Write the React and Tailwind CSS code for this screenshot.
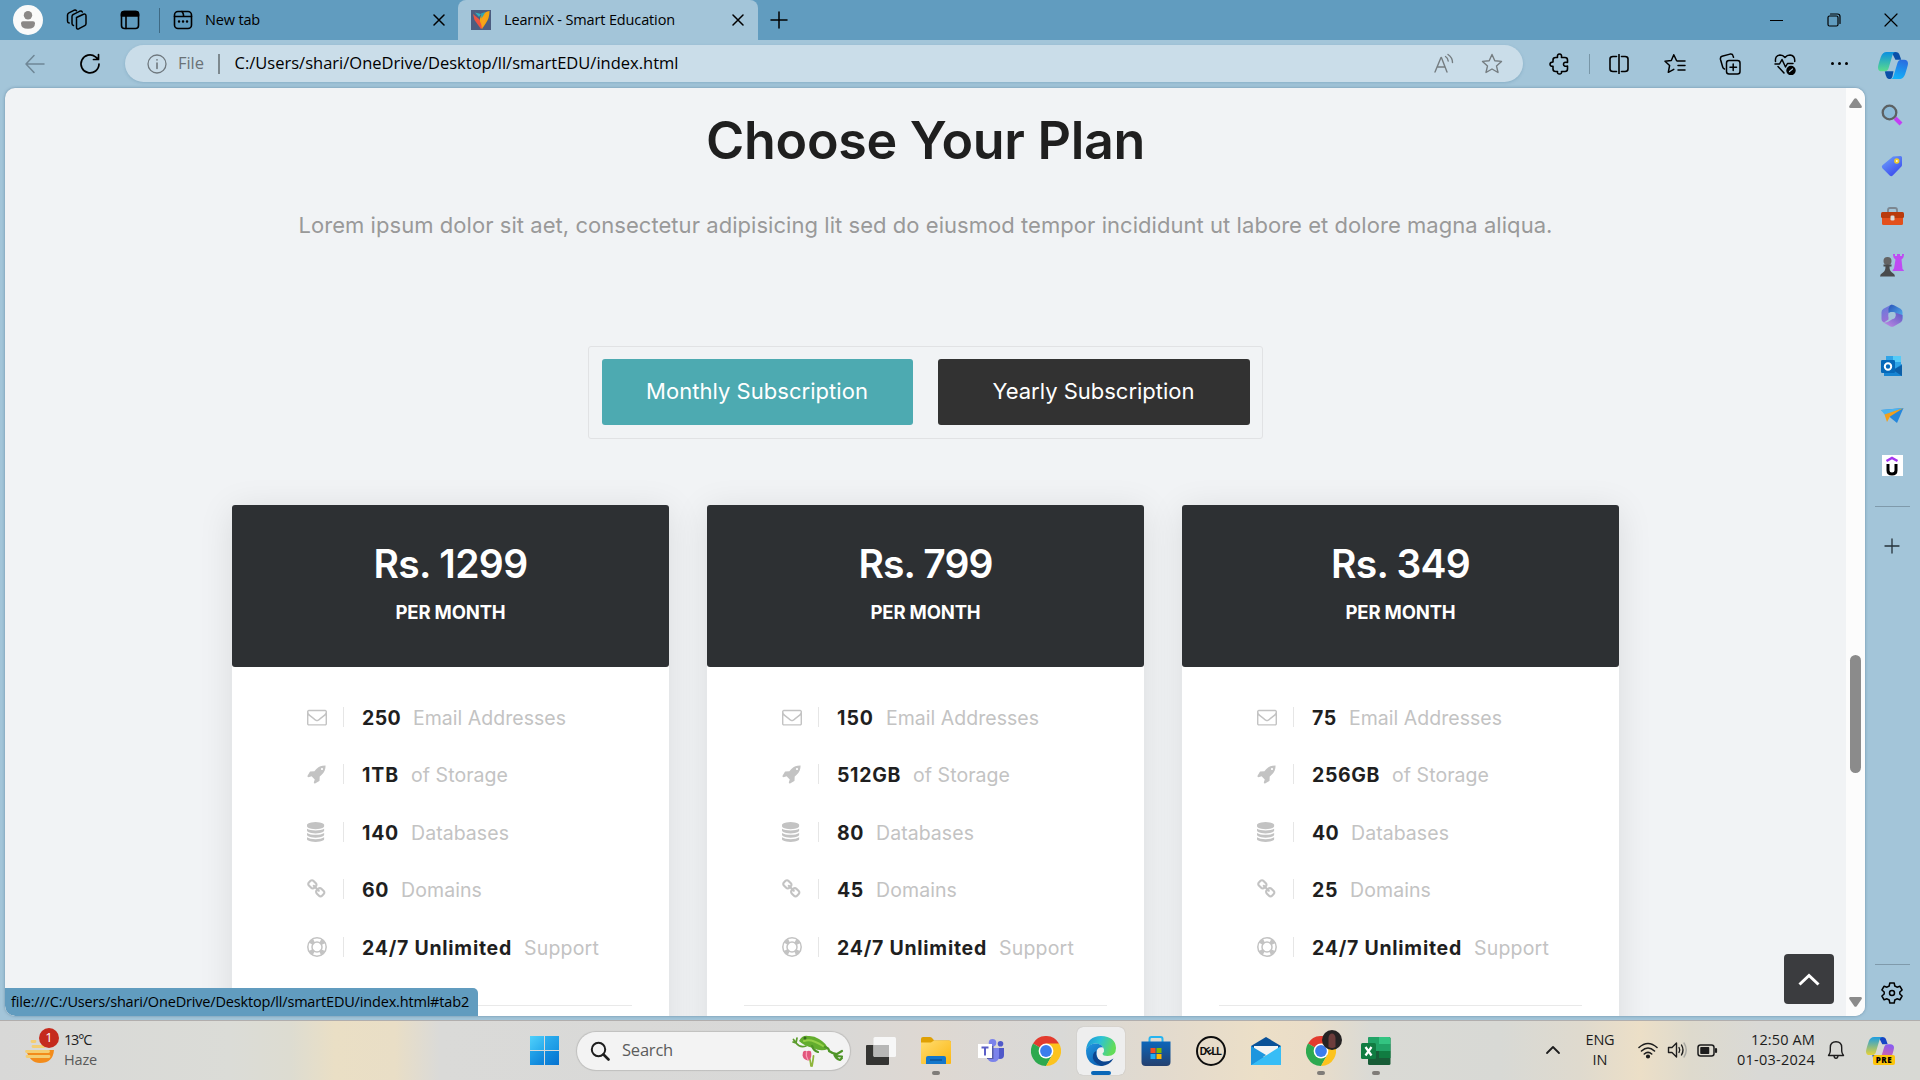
import React, { useLayoutEffect, useRef } from "react";

/* Text set to a given measure: tracking is computed from the natural width. */
function Fit({ w, className = "", children }) {
  const ref = useRef(null);
  useLayoutEffect(() => {
    const el = ref.current;
    el.style.letterSpacing = "0px";
    const natural = el.getBoundingClientRect().width;
    const n = el.textContent.length;
    const gap = (w - natural) / n;
    el.style.letterSpacing = `${gap}px`;
  }, [w, children]);
  return (
    <span ref={ref} className={`inline-block whitespace-nowrap ${className}`}>
      {children}
    </span>
  );
}

function Ic({ s = 20, sw = 1.5, className = "", vb = "0 0 20 20", children }) {
  return (
    <svg
      width={s}
      height={s}
      viewBox={vb}
      fill="none"
      stroke="currentColor"
      strokeWidth={sw}
      strokeLinecap="round"
      strokeLinejoin="round"
      className={`shrink-0 ${className}`}
    >
      {children}
    </svg>
  );
}

function Slot({ className, children }) {
  return <div className={`flex shrink-0 items-center justify-center ${className}`}>{children}</div>;
}

const CloseX = ({ s = 12 }) => (
  <Ic s={s} vb="0 0 12 12" sw={1.5}>
    <path d="M1 1l10 10M11 1L1 11" />
  </Ic>
);

function TabStrip() {
  return (
    <div className="flex h-10 items-center bg-[#619cbf] text-black">
      <Slot className="ml-[13px] w-[30px]">
        <div className="flex size-[30px] items-center justify-center rounded-full bg-[#fafafa]">
          <svg width="16" height="18" viewBox="0 0 16 18" fill="#8b8887">
            <circle cx="8" cy="4.2" r="4.2" />
            <path d="M1 12.2q0-2 2-2h10q2 0 2 2Q15 17.700 8 17.700T1 12.200z" />
          </svg>
        </div>
      </Slot>
      <Slot className="ml-[22px] w-6">
        <Ic s={22} vb="0 0 22 22" sw={1.5}>
          <path d="M10.500 8.500l7-3.300q2.500-.8 2.500 1.800v7.500q0 1.500-1.300 2.200l-5.700 3q-2.500 1-2.500-1.500z" />
          <path d="M7.500 16.500q-1.500-.3-1.500-2V7.500q0-1.500 1.500-2.200l6-3q2-.8 2.800.7" />
          <path d="M3.200 14q-1.700-.2-1.700-2V6q0-1.500 1.400-2.200l5-2.500q1.800-.7 2.600.5" />
        </Ic>
      </Slot>
      <Slot className="ml-[29px] w-6">
        <Ic s={20} sw={1.6}>
          <rect x="1.500" y="1.500" width="17" height="17" rx="3" />
          <path d="M1.500 6V4q0-2.500 2.500-2.500h12q2.500 0 2.500 2.500v2z" fill="currentColor" />
          <path d="M6 6v12.500" />
        </Ic>
      </Slot>
      <div className="ml-[17px] h-[25px] w-px bg-[#3f6a84]" />
      <div className="flex h-10 w-[298px] items-center">
        <Slot className="ml-[13px] w-5">
          <Ic s={20} sw={1.6}>
            <rect x="1.500" y="1.500" width="17" height="17" rx="3.500" />
            <path d="M1.500 6.500h9V5q0-1.500-1.500-3.500M10.500 6.500h8" />
            <path d="M6 11.500h.1M10 11.500h.1M14 11.500h.1" strokeWidth="2.400" />
          </Ic>
        </Slot>
        <Fit w={55} className="ml-[12px] text-[14.500px]">New tab</Fit>
        <Slot className="mr-[9px] ml-auto w-5"><CloseX /></Slot>
      </div>
      <div className="flex h-10 w-[300px] items-center rounded-t-lg bg-[#a3c5d9]">
        <svg width="20" height="20" viewBox="0 0 20 20" className="ml-[13px] shrink-0">
          <rect width="20" height="20" fill="#4c5d80" />
          <path d="M4 2.500l6 1.500-2 3z" fill="#2fb0c0" />
          <path d="M10 5.500Q14 1.500 18.500 1q0 7-3.500 12l-4 6-3-7z" fill="#f5a60f" />
          <path d="M2 4l6 5 3.500 8.500L10 19 3.500 10z" fill="#ee5340" />
          <path d="M10 3.500l4.500-1.500-4 6.500z" fill="#2fa5b5" />
          <path d="M11 8l5.500-4-3 9-3 5z" fill="#f9a31c" />
        </svg>
        <Fit w={171} className="ml-[13px] text-[14.500px]">LearniX - Smart Education</Fit>
        <Slot className="mr-[10px] ml-auto w-5"><CloseX /></Slot>
      </div>
      <Slot className="ml-[11px] w-5">
        <Ic s={18} vb="0 0 18 18" sw={1.500}><path d="M9 1v16M1 9h16" /></Ic>
      </Slot>
      <Slot className="ml-auto w-[57px]"><div className="h-px w-[13px] bg-black" /></Slot>
      <Slot className="w-[57px]">
        <Ic s={14} vb="0 0 14 14" sw={1.200}>
          <rect x="1" y="3" width="10" height="10" rx="1.500" />
          <path d="M3.500 1h7q2.500 0 2.500 2.500v7" />
        </Ic>
      </Slot>
      <Slot className="mr-px w-[57px]">
        <Ic s={14} vb="0 0 14 14" sw={1.200}><path d="M1 1l12 12M13 1L1 13" /></Ic>
      </Slot>
    </div>
  );
}

function CopilotMark({ w = 31, colors }) {
  const [a, b, c, d, e, id] = colors;
  return (
    <svg width={w} height={(w * 28) / 31} viewBox="0 0 31 28" className="shrink-0">
      <defs>
        <linearGradient id={`${id}l`} x1="0" y1="0" x2="0" y2="1">
          <stop offset="0" stopColor={a} />
          <stop offset="1" stopColor={b} />
        </linearGradient>
        <linearGradient id={`${id}r`} x1="0.600" y1="0" x2="0.300" y2="1">
          <stop offset="0" stopColor={c} />
          <stop offset="1" stopColor={d} />
        </linearGradient>
      </defs>
      <path d="M14 0h4q3.500 0 4.500 3.500L24 8h-6z" fill={e} />
      <path d="M7 20h9l-1 5q-.8 3-3 3-3 0-4-4z" fill={e} />
      <path d="M9 0h9.500Q15.800 0 15 3l-4 13.500Q10 20 6.500 20H4q-4 0-4-4 0-2 3-11Q4.700 0 9 0z" fill={`url(#${id}l)`} />
      <path d="M22 28h-9.500q2.700 0 3.500-3l4-13.500Q21 8 24.500 8H27q4 0 4 4 0 2-3 11-1.700 5-6 5z" fill={`url(#${id}r)`} />
    </svg>
  );
}

function Toolbar() {
  return (
    <div className="flex h-12 items-center bg-[#a3c5d9] pb-px text-black">
      <Slot className="ml-[25px] w-5 text-[#6f8796]">
        <Ic s={20}><path d="M19 10H1M9 1.500L1 10l8 8.500" /></Ic>
      </Slot>
      <Slot className="ml-[35px] w-5">
        <Ic s={22} vb="0 0 22 22" sw={1.700}>
          <path d="M20 11a9 9 0 1 1-3.500-7.200L19 6M19.500 1.500V6.500H14.500" />
        </Ic>
      </Slot>
      <div className="ml-[25px] flex h-[37px] w-[1398px] items-center rounded-full bg-[#cadde9] shadow-[0_1px_3px_rgba(60,110,145,0.25)]">
        <Slot className="ml-[22px] w-5 text-[#6f787e]">
          <Ic s={20} sw={1.300}>
            <circle cx="10" cy="10" r="9" />
            <path d="M10 9v5.500M10 5.800v.1" strokeWidth="1.600" />
          </Ic>
        </Slot>
        <Fit w={26} className="ml-[11px] text-[16.500px] text-[#6a7277]">File</Fit>
        <div className="ml-[14px] h-5 w-[1.500px] bg-[#7d898f]" />
        <Fit w={444} className="ml-[15px] text-[16.500px]">C:/Users/shari/OneDrive/Desktop/ll/smartEDU/index.html</Fit>
        <Slot className="mr-[27px] ml-auto w-[22px] text-[#757d81]">
          <Ic s={22} vb="0 0 22 22" sw={1.400}>
            <path d="M2 19L8 4.500h.4L14 19M4.200 14h7.800M12.500 3.500q2.500 1.500 2.700 4.500M15 1.500q4.500 3 4.500 8" />
          </Ic>
        </Slot>
        <Slot className="mr-[21px] w-5 text-[#757d81]">
          <Ic s={22} vb="0 0 22 22" sw={1.400}>
            <path d="M11 1.500l2.800 6.200 6.700.7-5 4.500 1.500 6.600L11 16l-6 3.500 1.500-6.600-5-4.500 6.700-.7z" />
          </Ic>
        </Slot>
      </div>
      <Slot className="ml-[26px] w-[22px]">
        <Ic s={22} vb="0 0 22 22" sw={1.600}>
          <path d="M4 7q0-2.500 2.500-2.500h2q-.5-3.500 2-3.500t2 3.500h3.500Q18.500 4.500 18.500 7v2.500q-4-.8-4 1.800t4 1.800V16q0 2.500-2.500 2.500h-3.500q.5 2.500-2 2.500t-2-2.500H6.500Q4 18.500 4 16v-2.700Q1 13.500 1 11.300T4 9z" />
        </Ic>
      </Slot>
      <div className="ml-[18px] h-5 w-px bg-[#7896a7]" />
      <Slot className="ml-[18px] w-[22px]">
        <Ic s={20} sw={1.600}>
          <path d="M7.500 2.500H4Q1 2.500 1 5v10q0 2.500 3 2.500h3.500M12.500 2.500H16q3 0 3 2.500v10q0 2.500-3 2.500h-3.500M10 .5v19" />
        </Ic>
      </Slot>
      <Slot className="ml-[34px] w-[22px]">
        <Ic s={22} vb="0 0 22 22" sw={1.500}>
          <path d="M12.500 7.500L9.800 1.800 7.300 7.500 1 8.200l4.600 4.300-1.300 6.800 5.500-3M13 8h8M14 12.500h7M14 17h7" />
        </Ic>
      </Slot>
      <Slot className="ml-[33px] w-[22px]">
        <Ic s={22} vb="0 0 22 22" sw={1.500}>
          <rect x="7.500" y="7.500" width="13.500" height="13.500" rx="2.500" />
          <path d="M14.200 11v6.500M11 14.200h6.500M5.500 16Q4 15.500 3.700 14L1.500 6.500Q1 4 3 3.300l8-2.200q2.500-.5 3 1.600l.5 1.500" />
        </Ic>
      </Slot>
      <Slot className="ml-[33px] w-[22px]">
        <Ic s={22} vb="0 0 22 22" sw={1.500}>
          <path d="M1.500 8.500Q.8 2.500 6 2q3 0 5 2.500Q13 2 16 2q5.200.5 4.700 6.500M4 13.500l6 6.500M1 11h4.500L8 6.500l3.500 7.500 2-3.500H19" />
          <circle cx="17" cy="17.500" r="4" fill="currentColor" />
          <path d="M15.500 18.500l3-2.500" stroke="#a3c5d9" strokeWidth="1.200" />
        </Ic>
      </Slot>
      <div className="ml-[35px] flex w-[17px] shrink-0 justify-between">
        <i className="size-[3px] rounded-full bg-black" />
        <i className="size-[3px] rounded-full bg-black" />
        <i className="size-[3px] rounded-full bg-black" />
      </div>
      <Slot className="mt-1 ml-[29px] w-[31px]">
        <CopilotMark w={30} colors={["#0a8fe0", "#5bdc8c", "#2a6ee0", "#12b4fa", "#0a4fa8", "cp1"]} />
      </Slot>
    </div>
  );
}

const ICONS = {
  mail: "M1664 1504v-768q-32 36-69 66-268 206-426 338-51 43-83 67t-86.5 48.500-102.500 24.500h-2q-48 0-102.500-24.500t-86.500-48.500-83-67q-158-132-426-338-37-30-69-66v768q0 13 9.500 22.500t22.500 9.500h1472q13 0 22.500-9.500t9.500-22.500zm0-1051v-24.500l-.5-13-3-12.500-5.500-9-9-7.500-14-2.500h-1472q-13 0-22.500 9.500t-9.500 22.500q0 168 147 284 193 152 401 317 6 5 35 29.500t46 37.500 44.500 31.500 50.500 27.500 43 9h2q20 0 43-9t50.500-27.500 44.500-31.500 46-37.500 35-29.500q208-165 401-317 54-43 100.500-115.500t46.500-131.500zm128-37v1088q0 66-47 113t-113 47h-1472q-66 0-113-47t-47-113v-1088q0-66 47-113t113-47h1472q66 0 113 47t47 113z",
  rocket: "M1440 448q0-40-28-68t-68-28-68 28-28 68 28 68 68 28 68-28 28-68zm224-288q0 249-75.500 430.500t-253.500 360.500q-81 80-195 176l-20 379q-2 16-16 26l-384 224q-7 4-16 4-12 0-23-9l-64-64q-13-14-8-32l85-276-281-281-276 85q-3 1-9 1-14 0-23-9l-64-64q-17-19-5-39l224-384q10-14 26-16l379-20q96-114 176-195 188-187 358-258t431-71q14 0 24 9.500t10 22.500z",
  database: "M768 768q237 0 443-43t325-127v170q0 69-103 128t-280 93.500-385 34.500-385-34.500-280-93.500-103-128v-170q119 84 325 127t443 43zm0 768q237 0 443-43t325-127v170q0 69-103 128t-280 93.500-385 34.500-385-34.500-280-93.500-103-128v-170q119 84 325 127t443 43zm0-384q237 0 443-43t325-127v170q0 69-103 128t-280 93.500-385 34.500-385-34.500-280-93.500-103-128v-170q119 84 325 127t443 43zm0-1152q208 0 385 34.500t280 93.500 103 128v128q0 69-103 128t-280 93.500-385 34.500-385-34.500-280-93.500-103-128v-128q0-69 103-128t280-93.500 385-34.500z",
  link: "M1456 1216q0-40-28-68l-208-208q-28-28-68-28-42 0-72 32 3 3 19 18.500t21.500 21.500 15 19 13 25.500 3.500 27.500q0 40-28 68t-68 28q-15 0-27.500-3.500t-25.500-13-19-15-21.500-21.500-18.500-19q-33 31-33 73 0 40 28 68l206 207q27 27 68 27 40 0 68-26l147-146q28-28 28-67zm-703-705q0-40-28-68l-206-207q-28-28-68-28-39 0-68 27l-147 146q-28 28-28 67 0 40 28 68l208 208q27 27 68 27 42 0 72-31-3-3-19-18.500t-21.500-21.500-15-19-13-25.500-3.500-27.500q0-40 28-68t68-28q15 0 27.500 3.500t25.500 13 19 15 21.500 21.500 18.500 19q33-31 33-73zm895 705q0 120-85 203l-147 146q-83 83-203 83-121 0-204-85l-206-207q-83-83-83-203 0-123 88-209l-88-88q-86 88-208 88-120 0-204-84l-208-208q-84-84-84-204t85-203l147-146q83-83 203-83 121 0 204 85l206 207q83 83 83 203 0 123-88 209l88 88q86-88 208-88 120 0 204 84l208 208q84 84 84 204z",
};

function FeatureIcon({ name }) {
  if (name === "ring") {
    return (
      <svg width="20" height="20" viewBox="0 0 20 20" fill="none" stroke="#c3c3c3">
        <circle cx="10" cy="10" r="9.200" strokeWidth="1.500" />
        <circle cx="10" cy="10" r="5" strokeWidth="1.500" />
        <circle cx="10" cy="10" r="7.100" strokeWidth="4.600" strokeDasharray="4.400 6.750" strokeDashoffset="-3.380" />
      </svg>
    );
  }
  return (
    <svg width="20" height="20" viewBox="0 0 1792 1792" fill="#c3c3c3">
      <path d={ICONS[name]} />
    </svg>
  );
}

const PLANS = [
  { price: "Rs. 1299", pw: 154, rows: [["mail", "250", 39, "Email Addresses", 153], ["rocket", "1TB", 37, "of Storage", 97], ["database", "140", 37, "Databases", 98], ["link", "60", 27, "Domains", 81], ["ring", "24/7 Unlimited", 150, "Support", 75]] },
  { price: "Rs. 799", pw: 134, rows: [["mail", "150", 37, "Email Addresses", 153], ["rocket", "512GB", 64, "of Storage", 97], ["database", "80", 27, "Databases", 98], ["link", "45", 27, "Domains", 81], ["ring", "24/7 Unlimited", 150, "Support", 75]] },
  { price: "Rs. 349", pw: 139, rows: [["mail", "75", 25, "Email Addresses", 153], ["rocket", "256GB", 68, "of Storage", 97], ["database", "40", 27, "Databases", 98], ["link", "25", 26, "Domains", 81], ["ring", "24/7 Unlimited", 150, "Support", 75]] },
];

function PlanCard({ plan }) {
  return (
    <div className="h-[560px] w-[437px] rounded-[3px] bg-white shadow-[0_5px_35px_rgba(0,0,0,0.1)]">
      <div className="flex h-[162px] flex-col items-center rounded-[3px] bg-[#2d3033] pt-[35px] text-white">
        <Fit w={plan.pw} className="text-[39px] leading-[48px] font-semibold">{plan.price}</Fit>
        <Fit w={110} className="mt-[12px] text-[18.500px] leading-6 font-bold">PER MONTH</Fit>
      </div>
      <div className="pt-[21px] pl-[74px]">
        {plan.rows.map(([icon, n, nw, label, lw]) => (
          <div key={label} className="flex h-[57.500px] items-center text-[19.500px] leading-[28px]">
            <div className="flex h-5 w-[37px] items-center pl-px"><FeatureIcon name={icon} /></div>
            <div className="h-5 w-px bg-[#e6e6e6]" />
            <Fit w={nw} className="mt-[2px] ml-[18px] font-bold text-[#1f1f1f]">{n}</Fit>
            <Fit w={lw} className="mt-[2px] ml-3 text-[#c3c3c3]">{label}</Fit>
          </div>
        ))}
      </div>
      <div className="mx-[37px] mt-[29px] h-px bg-[#e9e9e9]" />
    </div>
  );
}

function Page() {
  return (
    <main className="relative flex h-[928px] w-[1860px] shrink-0 overflow-hidden rounded-[10px] bg-[#f1f3f5] font-[Inter,sans-serif] shadow-[0_0_3px_rgba(50,90,120,0.5)]">
      <div className="flex w-[1841px] flex-col items-center">
        <h1 className="mt-[19px] shrink-0 text-[52px] leading-[68px] font-semibold text-[#1f1f1f]">
          <Fit w={439}>Choose Your Plan</Fit>
        </h1>
        <p className="mt-[35px] shrink-0 text-[22px] leading-[30px] text-[#999]">
          <Fit w={1254}>Lorem ipsum dolor sit aet, consectetur adipisicing lit sed do eiusmod tempor incididunt ut labore et dolore magna aliqua.</Fit>
        </p>
        <div className="mt-[106px] flex h-[93px] w-[675px] shrink-0 justify-between rounded-[3px] border border-[#e1e2e4] px-[12.500px] pt-3 text-[22px] text-white">
          <div className="flex h-[66px] w-[311px] items-center justify-center rounded-[3px] bg-[#4daab1] pb-0.5"><Fit w={222}>Monthly Subscription</Fit></div>
          <div className="flex h-[66px] w-[312px] items-center justify-center rounded-[3px] bg-[#323232] pb-0.5"><Fit w={202}>Yearly Subscription</Fit></div>
        </div>
        <div className="mt-[66px] flex shrink-0 gap-[38px]">
          {PLANS.map((p) => <PlanCard key={p.price} plan={p} />)}
        </div>
      </div>
      <div className="flex w-[19px] flex-col items-center bg-[#fcfcfc]">
        <svg width="13" height="10" viewBox="0 0 13 10" className="mt-[10px]" fill="#8b8b8b"><path d="M5.300.8q1.200-1 2.400 0l5 7.200q.6 2-1.200 2h-10q-1.800 0-1.200-2z" /></svg>
        <div className="mt-[547px] h-[118px] w-[11px] rounded-full bg-[#8b8b8b]" />
        <svg width="13" height="10" viewBox="0 0 13 10" className="mt-[224px]" fill="#8b8b8b"><path d="M5.300 9.200q1.200 1 2.400 0l5-7.200q.6-2-1.200-2h-10q-1.800 0-1.200 2z" /></svg>
      </div>
      <div className="absolute right-[31px] bottom-[12px] flex size-[50px] items-center justify-center rounded bg-[#3b3c3f]">
        <svg width="22" height="14" viewBox="0 0 22 14" fill="none" stroke="#fff" strokeWidth="3"><path d="M1.500 12.500L11 3.500l9.500 9" /></svg>
      </div>
      <div className="absolute bottom-0 left-0 flex h-7 w-[473px] items-center rounded-tr-[5px] rounded-bl-[10px] bg-[#619cbf] pl-[6px] font-['Open_Sans','Noto_Sans',sans-serif] text-[14.500px] text-black">
        <Fit w={458}>file:///C:/Users/shari/OneDrive/Desktop/ll/smartEDU/index.html#tab2</Fit>
      </div>
    </main>
  );
}

function Sidebar() {
  return (
    <aside className="flex h-[932px] w-[54px] shrink-0 flex-col items-center text-black">
      <div className="mt-[2px] flex flex-col">
        <Slot className="h-[50px]">
          <svg width="22" height="22" viewBox="0 0 22 22" fill="none">
            <path d="M14 14l6 6" stroke="#c43df5" strokeWidth="4" />
            <circle cx="8.500" cy="8.500" r="6.800" fill="#8dbbd8" stroke="#5c6163" strokeWidth="2.300" />
          </svg>
        </Slot>
        <Slot className="h-[51px]">
          <svg width="22" height="22" viewBox="0 0 22 22">
            <defs><linearGradient id="tag" x2=".7" y2="1"><stop stopColor="#71a8fb" /><stop offset="1" stopColor="#3a49ee" /></linearGradient></defs>
            <path d="M12 1.500L19.500 1Q21 1 21 2.500V10q0 1-.8 1.800l-8.500 8.700q-1.500 1.300-3 0l-7.300-7.300q-1.300-1.500 0-3z" fill="url(#tag)" />
            <circle cx="15.800" cy="6" r="1.800" fill="#f9fbe9" stroke="#f0cb2a" strokeWidth="1.700" />
          </svg>
        </Slot>
        <Slot className="h-[50px]">
          <svg width="23" height="18" viewBox="0 0 23 18">
            <path d="M7 6V3q0-2 2-2h5q2 0 2 2v3" fill="none" stroke="#7c8790" strokeWidth="1.800" />
            <rect x="1" y="9" width="21" height="9" rx="1.500" fill="#e3501c" />
            <rect y="5" width="23" height="6" rx="1.500" fill="#b93b0d" />
            <rect x="9.500" y="8.500" width="4" height="5" rx="1.300" fill="#d9dcdc" />
          </svg>
        </Slot>
        <Slot className="h-[49px]">
          <svg width="24" height="23" viewBox="0 0 24 23">
            <path d="M13 0h2v2h2V0h3v2h2V0h2q0 4-2.500 5.500L22.500 15q1.500 1 1.500 2H12.500q0-1.500 1.500-2.500l1.500-9Q13 4 13 0z" fill="#bf4bf3" />
            <circle cx="7.500" cy="7" r="4" fill="#646464" />
            <path d="M3.500 10.500h8v2h-2q0 4.500 2.500 6 3 1.500 3 4H0q0-2.500 3-4 2.500-1.500 2.500-6h-2z" fill="#494b4c" />
          </svg>
        </Slot>
        <Slot className="h-[51px]">
          <svg width="22" height="23" viewBox="0 0 22 23">
            <defs>
              <linearGradient id="m1" x2=".3" y2="1"><stop stopColor="#5b7fdc" /><stop offset="1" stopColor="#9c6fd6" /></linearGradient>
              <linearGradient id="m2" x2="1" y2="1"><stop stopColor="#2a55b8" /><stop offset="1" stopColor="#56b4f2" /></linearGradient>
              <linearGradient id="m3" x1="1" x2="0" y2="1"><stop stopColor="#5b59c4" /><stop offset="1" stopColor="#c58be6" /></linearGradient>
            </defs>
            <path d="M11 .3L2.500 4.800Q.5 6 .5 8.200v7Q.5 18 3 18.500l4.500-3V9q0-2 2-3z" fill="url(#m1)" />
            <path d="M9 1.500q2-1.300 4-.3l6.500 3.600q2 1 2 3.500v6.500L14 8.500Q12 7.200 7.500 9V4.500z" fill="url(#m2)" />
            <path d="M21.500 11v4.300q0 2-2 3.200L13 22.200q-2 1-4 0L2 18.300q3 .7 5.500-.8l5-3q2-1.200 2-3.300V8.800z" fill="url(#m3)" />
            <circle cx="11" cy="11.500" r="3.500" fill="#a3c5d9" />
          </svg>
        </Slot>
        <Slot className="h-[50px]">
          <svg width="22" height="22" viewBox="0 0 22 22">
            <rect x="5" y="1" width="15" height="13" fill="#2fa4e8" />
            <rect x="12" y="1" width="8" height="6" fill="#56cbf7" />
            <path d="M3 21V11l9 4 9-6v12z" fill="#1684d2" />
            <path d="M21 10v11l-9-6z" fill="#0c5fa8" />
            <rect y="5" width="14" height="13" rx="1.300" fill="#0669b9" />
            <circle cx="7" cy="11.500" r="3.200" fill="none" stroke="#fff" strokeWidth="2" />
          </svg>
        </Slot>
        <Slot className="h-[49px]">
          <svg width="23" height="17" viewBox="0 0 23 17">
            <path d="M0 3L22.500 1 16 16z" fill="#2587dc" />
            <path d="M0 3L22.500 1 4 8z" fill="#4cb4f1" />
            <path d="M3.500 7.500L22.500 1 9 9.500 6 15z" fill="#f3a01c" />
          </svg>
        </Slot>
        <Slot className="h-[51px]">
          <div className="flex size-[21px] items-center justify-center bg-white">
            <svg width="14" height="20" viewBox="0 0 14 20" fill="none">
              <path d="M1.500 5L7 2l5.500 3" stroke="#a435f0" strokeWidth="2.500" />
              <path d="M3 8v6.500q0 3.500 4 3.500t4-3.500V8" stroke="#000" strokeWidth="3" />
            </svg>
          </div>
        </Slot>
      </div>
      <div className="mt-[15px] h-px w-[35px] bg-[#7f9aab]" />
      <Ic s={16} vb="0 0 16 16" sw={1.300} className="mt-[31px] text-[#26323a]"><path d="M8 1v14M1 8h14" /></Ic>
      <div className="mt-auto h-px w-[35px] bg-[#7f9aab]" />
      <Ic s={24} vb="0 0 24 24" sw={1.500} className="mt-[16px] mb-[15px]">
        <path d="M9.800 2h4.400l.6 3 2.200 1.200 2.900-1 2.200 3.800-2.300 2v2l2.300 2-2.200 3.800-2.900-1-2.200 1.200-.6 3H9.800l-.6-3L7 17.800l-2.900 1L1.900 15l2.300-2v-2L1.900 9l2.200-3.800 2.900 1L9.200 5z" />
        <circle cx="12" cy="12" r="2.500" />
      </Ic>
    </aside>
  );
}

function Chrome() {
  return (
    <svg width="30" height="30" viewBox="0 0 30 30">
      <path d="M15 15L2 7.500A15 15 0 0 1 28 7.500z" fill="#e33b2e" />
      <path d="M15 15L2 7.500A15 15 0 0 0 15 30l6.500-11.500z" fill="#2da94f" />
      <path d="M15 7.500h13A15 15 0 0 1 15 30l6.500-11.500z" fill="#fcc31e" />
      <circle cx="15" cy="15" r="7.400" fill="#fff" />
      <circle cx="15" cy="15" r="5.900" fill="#3b7ded" />
    </svg>
  );
}

function Edge() {
  return (
    <svg width="30" height="30" viewBox="0 0 30 30">
      <defs>
        <linearGradient id="eg1" x2="1" y2=".3"><stop stopColor="#1a8fd8" /><stop offset=".5" stopColor="#2cc2d6" /><stop offset="1" stopColor="#62dc58" /></linearGradient>
        <linearGradient id="eg2" x2=".6" y2="1"><stop stopColor="#2298e0" /><stop offset="1" stopColor="#0d63b5" /></linearGradient>
      </defs>
      <path d="M0 14Q1.500 0 15 0q14.500.5 15 12 0 8-8.500 8-5 0-5-2.500 2-1.500 1.500-4Q16.500 8 9.500 7.500 3 8 0 14z" fill="url(#eg1)" />
      <path d="M0 14q2.500-6.500 9.500-6.500 6 .3 7.500 4-5-1-6.500 4-1 8 8 13.500-2 1-4 1Q0 29 0 14z" fill="url(#eg2)" />
      <path d="M10.500 15q-2 7 5 10 6 2 12-2.500-4 7-12 7.500Q5 26 7 19q1-3.500 3.500-4z" fill="#0c4690" />
    </svg>
  );
}

function TaskIcon({ active, dot, children }) {
  return (
    <div className="flex w-[55px] shrink-0 justify-center">
      <div className={`relative flex h-12 w-12 items-center justify-center ${active ? "rounded-md bg-[#eeeeee] shadow-[0_0_1px_rgba(0,0,0,0.25)]" : ""}`}>
        {children}
        {active && <i className="absolute bottom-0 h-1 w-5 rounded-full bg-[#0a67b7]" />}
        {dot && <i className="absolute bottom-0 h-1 w-2 rounded-full bg-[#7f7c78]" />}
      </div>
    </div>
  );
}

function Frog() {
  return (
    <svg width="52" height="32" viewBox="0 0 52 32" fill="none" strokeLinecap="round" strokeLinejoin="round">
      <path d="M19 31q-.5-5-1.500-8M20 31q1-5 1.500-10" stroke="#8fb53c" strokeWidth="1.800" />
      <path d="M11 17q2-2 3.500-.5Q17 15 19 16.500q1.500 6-2.500 9-5-.5-6-5z" fill="#e2557c" />
      <path d="M14.500 17q-1 4 1.500 8" stroke="#f79db5" strokeWidth="1.300" />
      <path d="M14 11q-6 2-10-3M4 8L1 7M4 8L1.500 4.500M4 8l1-5" stroke="#5c9c2c" strokeWidth="1.700" />
      <path d="M7 6Q10 0 16 1q6-.5 11 3 7 4 9 10-7 3-15-1Q12 11 7 6z" fill="#63ad2e" />
      <path d="M12 6q7-3 19 5" stroke="#93cf47" strokeWidth="2" />
      <circle cx="13" cy="3" r="1.500" fill="#35681d" />
      <path d="M20 11q2 5 6 6M33 12q4 1 4 4 4 3 8 3l5-3M42 19q2 5 6 6l2-2M44 21l6 .5" stroke="#4f9528" strokeWidth="2.200" />
    </svg>
  );
}

function Taskbar() {
  return (
    <footer className="flex h-[60px] items-center border-t border-[#b1aead] bg-[linear-gradient(90deg,#d8d8d7_0px,#dbdcd7_230px,#dddcd1_290px,#eadfc5_335px,#e9dec6_395px,#dadad8_440px,#d8d8d7_820px,#ded8d2_930px,#d9d9d7_1060px,#e2dace_1160px,#ecdfc7_1260px,#eaddc8_1310px,#dadad5_1370px,#d8d9d5_1500px,#dfdace_1580px,#ecdfc7_1640px,#dedacd_1690px,#d9d9d6_1760px,#d8d9d4_1920px)] text-[#1d1d1d]">
      <div className="flex w-[516px] items-center pb-0.5 pl-[25px]">
        <div className="relative h-10 w-[34px]">
          <svg width="34" height="40" viewBox="0 0 34 40" fill="none">
            <path d="M1 20q6 10 0 0h28q-1 13-14 13Q5 33 1 20z" fill="#f38c1b" />
            <path d="M1.500 21.500h22M2 26.500h22M8 16.500h11M7 11.500h3" stroke="#f4ce72" strokeWidth="2.800" strokeLinecap="round" />
          </svg>
          <div className="absolute -top-[2px] left-[14px] flex size-5 items-center justify-center rounded-full bg-[#c52a1d] text-[13px] text-white">1</div>
        </div>
        <div className="ml-[5px] flex flex-col text-[14.500px] leading-5">
          <Fit w={29}>13°C</Fit>
          <Fit w={33} className="text-[#5a5a5a]">Haze</Fit>
        </div>
      </div>
      <Slot className="w-[57px]">
        <div className="grid grid-cols-2 gap-px">
          <i className="size-[14px] bg-linear-to-br from-[#4fd0fb] to-[#25abec]" />
          <i className="size-[14px] bg-linear-to-br from-[#2fb0ef] to-[#1795e2]" />
          <i className="size-[14px] bg-linear-to-br from-[#25a6ea] to-[#0b80d8]" />
          <i className="size-[14px] bg-linear-to-br from-[#1490e0] to-[#0873d0]" />
        </div>
      </Slot>
      <div className="ml-[4px] flex h-[38px] w-[273px] shrink-0 items-center rounded-full bg-[#f3f3f3] shadow-[0_0_1px_1px_rgba(0,0,0,0.12)]">
        <Ic s={20} sw={2} className="ml-[13px]"><circle cx="8.500" cy="8.500" r="6.700" /><path d="M13.500 13.500l5 5" strokeWidth="2.600" /></Ic>
        <Fit w={51} className="ml-[12px] text-[16.500px] text-[#5c5c5c]">Search</Fit>
        <div className="mr-[6px] ml-auto"><Frog /></div>
      </div>
      <div className="ml-[3px] flex">
        <TaskIcon>
          <svg width="30" height="28" viewBox="0 0 30 28"><rect y="8" width="23" height="20" rx="1" fill="#343432" /><rect x="7.500" width="22.500" height="20" rx="1.500" fill="#f7f7f7" /><path d="M7.500 8H23v12H9q-1.500 0-1.500-1.500z" fill="#b7b7b6" /></svg>
        </TaskIcon>
        <TaskIcon dot>
          <svg width="30" height="27" viewBox="0 0 30 27">
            <defs><linearGradient id="fold" x2="1" y2="1"><stop stopColor="#ffdc70" /><stop offset="1" stopColor="#fcb711" /></linearGradient></defs>
            <path d="M0 2q0-2 2-2h7q1.500 0 3 2l1 1.500h15q2 0 2 2V10H0z" fill="#dfa004" />
            <path d="M0 5.500h10l3-2h15q2 0 2 2V26q0 1-1 1H1q-1 0-1-1z" fill="url(#fold)" />
            <path d="M5 27v-6q0-2 2-2h16q2 0 2 2v6z" fill="#1477cb" /><path d="M9 23h12" stroke="#0b4a8c" strokeWidth="1.200" />
          </svg>
        </TaskIcon>
        <TaskIcon>
          <svg width="26" height="24" viewBox="0 0 26 24">
            <circle cx="14.500" cy="3.800" r="3.800" fill="#7b83eb" /><circle cx="22.500" cy="4.800" r="2.800" fill="#5059c9" />
            <path d="M18 9h8v7q0 4-4 4t-4-4z" fill="#5059c9" /><path d="M9 9h12v8q0 6-6 6-5 0-6-5z" fill="#7b83eb" />
            <path d="M9 7h6.500v13H9z" fill="#575ea8" /><rect y="5" width="14" height="14" fill="#fff" />
            <path d="M3.500 8.500h7M7 8.500v8" stroke="#5b5fc7" strokeWidth="2" />
          </svg>
        </TaskIcon>
        <TaskIcon><Chrome /></TaskIcon>
        <TaskIcon active><Edge /></TaskIcon>
        <TaskIcon>
          <svg width="30" height="30" viewBox="0 0 30 30">
            <defs><linearGradient id="store" x2="0" y2="1"><stop stopColor="#0c66ba" /><stop offset="1" stopColor="#24406f" /></linearGradient></defs>
            <path d="M8.500 7V3q0-2 2-2h9q2 0 2 2v4" fill="none" stroke="#27b4f0" strokeWidth="2" />
            <path d="M.5 5.500h29V26q0 4-4 4h-21q-4 0-4-4z" fill="url(#store)" />
            <path d="M9.500 12h5v5h-5z" fill="#f25022" /><path d="M15.500 12h5v5h-5z" fill="#7fba00" /><path d="M9.500 18h5v5h-5z" fill="#20aef0" /><path d="M15.500 18h5v5h-5z" fill="#ffb900" />
          </svg>
        </TaskIcon>
        <TaskIcon>
          <div className="flex size-[30px] items-center justify-center rounded-full border-2 border-[#0d0d0d] font-[Inter,sans-serif] text-[10px] leading-none font-bold tracking-[-0.800px] text-[#0d0d0d]">
            D<span className="-rotate-[35deg]">E</span>LL
          </div>
        </TaskIcon>
        <TaskIcon>
          <svg width="30" height="28" viewBox="0 0 30 28"><path d="M0 9L15 0l15 9v3H0z" fill="#0a5198" /><path d="M3 9h24v9H3z" fill="#f4f4f4" /><path d="M0 9l21 19H0z" fill="#1f94dc" /><path d="M30 9v19H0z" fill="#37bdf6" /><path d="M0 9v19L15 18z" fill="#1e96de" /></svg>
        </TaskIcon>
        <TaskIcon dot>
          <Chrome />
          <svg width="20" height="20" viewBox="0 0 20 20" className="absolute top-[3px] left-[25px]"><circle cx="10" cy="10" r="10" fill="#262324" /><path d="M6.500 17V8Q7 3.500 10 3.500T13.500 8v9q-3.500 2-7 0z" fill="#6d3d3c" /></svg>
        </TaskIcon>
        <TaskIcon dot>
          <svg width="30" height="28" viewBox="0 0 30 28">
            <rect x="7" width="22.500" height="28" rx="1.500" fill="#185c37" /><path d="M7 1.500Q7 0 8.500 0H18v14H7z" fill="#21a366" /><path d="M18 0h10q1.500 0 1.500 1.500V7H18z" fill="#33c481" /><path d="M18 7h11.500v7H18z" fill="#21a366" /><path d="M18 14h11.500v7H18z" fill="#107c41" />
            <rect y="6" width="15" height="16" rx="1.500" fill="#107c41" /><path d="M4.500 10l6 8.500M10.500 10l-6 8.500" stroke="#fff" strokeWidth="2.200" />
          </svg>
        </TaskIcon>
      </div>
      <div className="ml-auto flex items-center pr-px pb-px">
        <Ic s={16} vb="0 0 16 16" sw={1.800} className="mr-[24px]"><path d="M2 11l6-6 6 6" /></Ic>
        <div className="mr-[23px] flex w-[30px] flex-col items-center text-[14.500px] leading-5"><Fit w={29}>ENG</Fit><Fit w={15}>IN</Fit></div>
        <Ic s={20} sw={1.600} className="mr-[9px]"><path d="M1 7.500q9-8 18 0M3.500 11q6.500-6 13 0M6.300 14q3.700-3.300 7.400 0" /><circle cx="10" cy="16.500" r="1.300" fill="currentColor" /></Ic>
        <Ic s={20} sw={1.400} className="mr-[10px]"><path d="M1.500 7.500H5L9.500 3v14L5 12.500H1.500zM12 7.500q1.500 2.500 0 5M14.500 5q3 5 0 10" /><path d="M17 3q4.500 7 0 14" stroke="#a9a9a3" /></Ic>
        <Ic s={21} vb="0 0 21 20" sw={1.500} className="mr-[18px]"><rect x="1" y="4.500" width="16" height="11" rx="2.500" /><rect x="4" y="7.300" width="7.500" height="5.500" fill="currentColor" /><path d="M19 8.500v3" strokeWidth="2.200" /></Ic>
        <div className="mr-[11px] flex w-[79px] flex-col items-end text-[14.500px] leading-5"><Fit w={64}>12:50 AM</Fit><Fit w={78}>01-03-2024</Fit></div>
        <Ic s={20} sw={1.400} className="mr-[20px]"><path d="M2.500 15.500h15q-1.800-2.500-1.800-4.500V7.500q0-5.800-5.700-5.800T4.300 7.500V11q0 2-1.800 4.500zM8 16q.3 2.300 2 2.300t2-2.300" /></Ic>
        <div className="relative mr-[24px] flex h-[26px] w-[29px] items-start">
          <CopilotMark w={28} colors={["#1b9de2", "#e7d336", "#8a5cf0", "#f2678a", "#1746c4", "cp2"]} />
          <div className="absolute top-[18px] left-[7px] flex h-[10px] w-[22px] items-center justify-center rounded-[2px] bg-[#fdc50b] text-[8px] font-extrabold tracking-[0.500px] text-black">PRE</div>
        </div>
      </div>
    </footer>
  );
}

export default function App() {
  return (
    <div className="flex h-[1080px] w-[1920px] flex-col overflow-hidden bg-[#a3c5d9] font-['Open_Sans','Noto_Sans',sans-serif]">
      <TabStrip />
      <Toolbar />
      <div className="flex h-[932px] pl-[5px]">
        <Page />
        <Sidebar />
      </div>
      <Taskbar />
    </div>
  );
}
